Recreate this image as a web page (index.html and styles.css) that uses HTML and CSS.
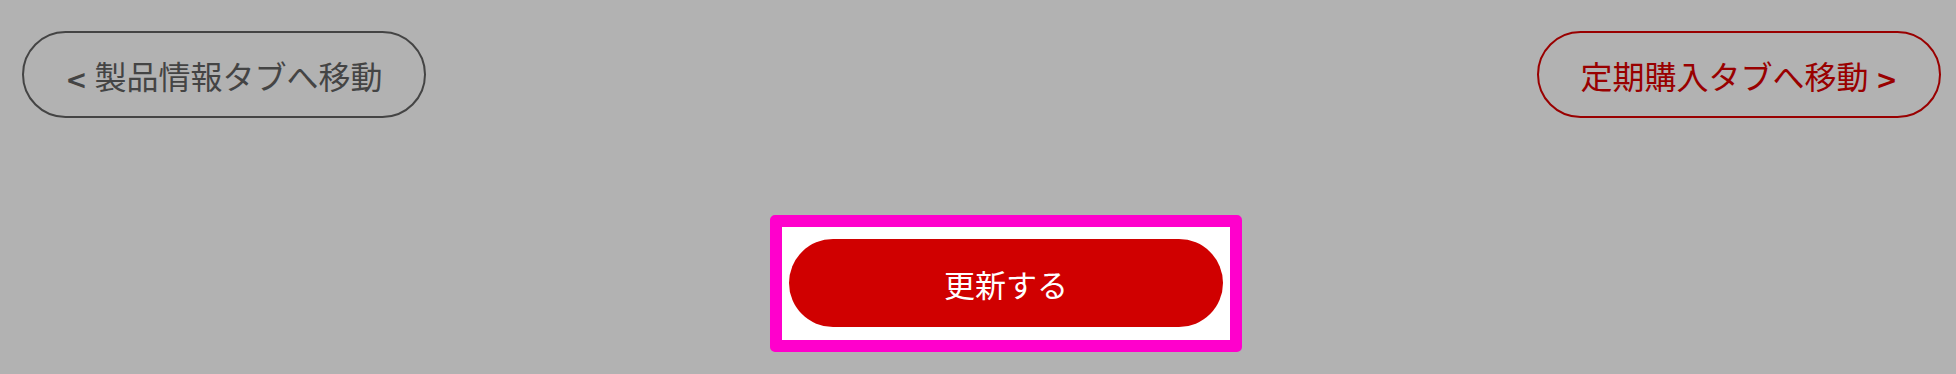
FILE: index.html
```html
<!DOCTYPE html>
<html lang="ja">
<head>
<meta charset="UTF-8" />
<meta name="viewport" content="width=device-width, initial-scale=1" />
<title>更新</title>
<link rel="stylesheet" href="styles.css">
</head>
<body>
  <div class="tab-nav">
    <button class="tab-btn tab-prev"><span class="arrow">&lt;</span> 製品情報タブへ移動</button>
    <button class="tab-btn tab-next">定期購入タブへ移動 <span class="arrow">&gt;</span></button>
  </div>

  <div class="update-area">
    <div class="highlight">
      <button class="update-btn">更新する</button>
    </div>
  </div>
</body>
</html>
```

FILE: styles.css
```css
body {
  margin: 0;
  background-color: #b2b2b2;
  font-family: "Noto Sans CJK JP", "Noto Sans", sans-serif;
}
.tab-nav {
  display: flex;
  justify-content: space-between;
  padding: 31px 15px 0 22px;
}
.tab-btn {
  width: 404px;
  height: 87px;
  border-radius: 44px;
  background-color: transparent;
  font-family: inherit;
  font-size: 32px;
  padding: 0;
  cursor: pointer;
}
.arrow {
  font-family: "DejaVu Sans", sans-serif;
  font-weight: 700;
  font-size: 26px;
}
.tab-prev {
  border: 2px solid #444444;
  color: #444444;
}
.tab-next {
  border: 2px solid #990000;
  color: #990000;
}
.update-area {
  display: flex;
  justify-content: center;
  padding-left: 56px;
  margin-top: 97px;
}
.highlight {
  border: 12px solid #ff00cc;
  border-radius: 5px;
  background-color: #ffffff;
  padding: 12px 7px 13px;
}
.update-btn {
  display: block;
  width: 434px;
  height: 88px;
  border: none;
  border-radius: 44px;
  background-color: #d00000;
  color: #ffffff;
  font-family: inherit;
  font-size: 31px;
  padding: 0;
  cursor: pointer;
}
```
